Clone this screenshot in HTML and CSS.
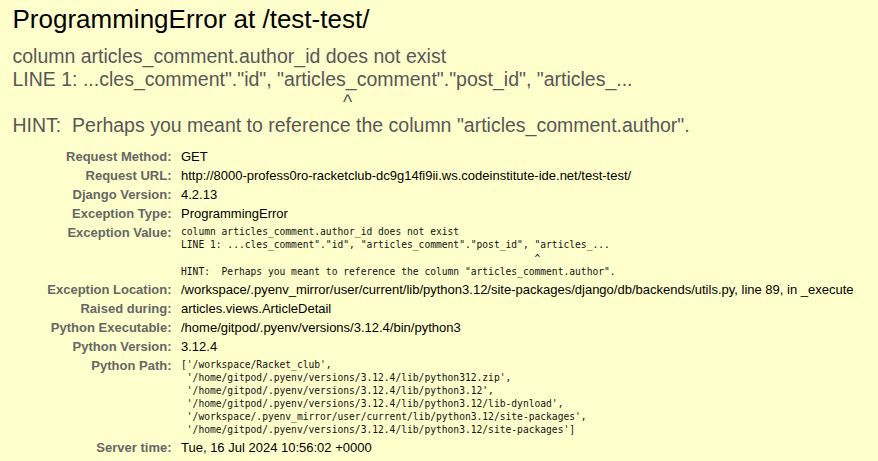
FILE: index.html
```html
<!DOCTYPE html>
<html lang="en">
<head>
<meta charset="utf-8">
<title>ProgrammingError at /test-test/</title>
<link rel="stylesheet" href="styles.css">
</head>
<body>
<div class="summary">
<h1 class="title">ProgrammingError at /test-test/</h1>
<pre class="exception-value">column articles_comment.author_id does not exist
LINE 1: ...cles_comment"."id", "articles_comment"."post_id", "articles_...
                                                             ^
HINT:  Perhaps you meant to reference the column "articles_comment.author".</pre>
<table class="meta">
<tbody>
<tr><th>Request Method:</th><td>GET</td></tr>
<tr><th>Request URL:</th><td>http://8000-profess0ro-racketclub-dc9g14fi9ii.ws.codeinstitute-ide.net/test-test/</td></tr>
<tr><th>Django Version:</th><td>4.2.13</td></tr>
<tr><th>Exception Type:</th><td>ProgrammingError</td></tr>
<tr><th>Exception Value:</th><td><pre class="code code-tall">column articles_comment.author_id does not exist
LINE 1: ...cles_comment"."id", "articles_comment"."post_id", "articles_...
                                                             ^
HINT:  Perhaps you meant to reference the column "articles_comment.author".</pre></td></tr>
<tr><th>Exception Location:</th><td>/workspace/.pyenv_mirror/user/current/lib/python3.12/site-packages/django/db/backends/utils.py, line 89, in _execute</td></tr>
<tr><th>Raised during:</th><td>articles.views.ArticleDetail</td></tr>
<tr><th>Python Executable:</th><td>/home/gitpod/.pyenv/versions/3.12.4/bin/python3</td></tr>
<tr><th>Python Version:</th><td>3.12.4</td></tr>
<tr><th>Python Path:</th><td><pre class="code">['/workspace/Racket_club',
 '/home/gitpod/.pyenv/versions/3.12.4/lib/python312.zip',
 '/home/gitpod/.pyenv/versions/3.12.4/lib/python3.12',
 '/home/gitpod/.pyenv/versions/3.12.4/lib/python3.12/lib-dynload',
 '/workspace/.pyenv_mirror/user/current/lib/python3.12/site-packages',
 '/home/gitpod/.pyenv/versions/3.12.4/lib/python3.12/site-packages']</pre></td></tr>
<tr><th>Server time:</th><td>Tue, 16 Jul 2024 10:56:02 +0000</td></tr>
</tbody>
</table>
</div>
</body>
</html>
```

FILE: styles.css
```css
html, body {
  margin: 0;
  padding: 0;
}

body {
  background: #ffc;
  color: #000;
  font-family: "Liberation Sans", Arial, sans-serif;
  font-size: 13px;
}

.summary {
  background: #ffc;
  padding: 4px 0 10px 12.5px;
}

.title {
  margin: 0;
  font-size: 26px;
  font-weight: normal;
  line-height: 31px;
}

.exception-value {
  margin: 10px 0;
  font-family: "Liberation Sans", Arial, sans-serif;
  font-size: 19.5px;
  line-height: 23px;
  color: #575757;
  white-space: pre;
}

.meta {
  width: 100%;
  border: none;
  border-collapse: collapse;
  background: transparent;
}

.meta th,
.meta td {
  vertical-align: top;
  padding: 2px 3px;
  line-height: 15px;
  text-align: left;
}

.meta th {
  width: 156px;
  padding-right: 6.5px;
  text-align: right;
  color: #666;
  font-weight: bold;
  white-space: nowrap;
}

.meta td {
  white-space: nowrap;
}

.code {
  margin: 0;
  font-family: "DejaVu Sans Mono", "Liberation Mono", monospace;
  font-size: 9.63px;
  line-height: 13px;
  color: #111;
  white-space: pre;
}

.code-tall {
  line-height: 13.3px;
}
```
